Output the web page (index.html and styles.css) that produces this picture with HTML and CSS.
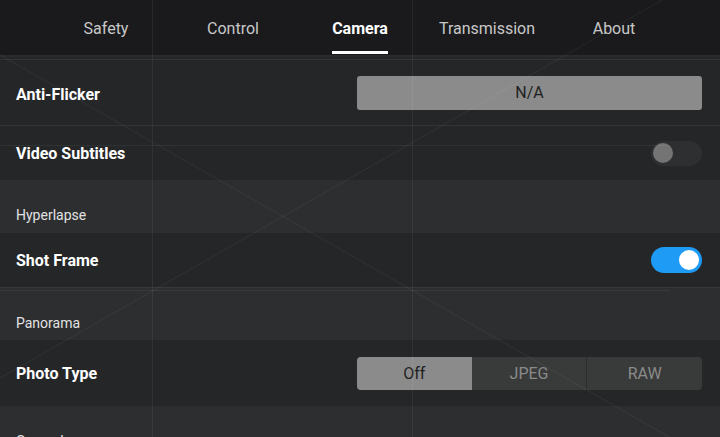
FILE: index.html
```html
<!DOCTYPE html>
<html>
<head>
<meta charset="utf-8">
<link rel="stylesheet" href="styles.css">
</head>
<body>
<div class="page">
  <nav class="tabs">
    <div class="tab"><span>Safety</span></div>
    <div class="tab"><span>Control</span></div>
    <div class="tab active"><span>Camera</span></div>
    <div class="tab"><span>Transmission</span></div>
    <div class="tab"><span>About</span></div>
  </nav>
  <div class="list">
    <div class="row tall first">
      <span class="label low">Anti-Flicker</span>
      <div class="button">N/A</div>
    </div>
    <div class="row">
      <span class="label">Video Subtitles</span>
      <div class="toggle"><div class="knob"></div></div>
    </div>
    <div class="section">Hyperlapse</div>
    <div class="row">
      <span class="label">Shot Frame</span>
      <div class="toggle on"><div class="knob"></div></div>
    </div>
    <div class="section sep">Panorama</div>
    <div class="row tall">
      <span class="label">Photo Type</span>
      <div class="segmented">
        <div class="seg selected">Off</div>
        <div class="seg">JPEG</div>
        <div class="seg divided">RAW</div>
      </div>
    </div>
    <div class="section">General</div>
  </div>
  <svg class="overlay" width="720" height="437" viewBox="0 0 720 437">
    <line x1="152.5" y1="0" x2="152.5" y2="437"/>
    <line x1="412.5" y1="0" x2="412.5" y2="437"/>
    <line x1="0" y1="55" x2="720" y2="466"/>
    <line x1="0" y1="378" x2="720" y2="-33"/>
    <line x1="0" y1="145.5" x2="670" y2="145.5"/>
    <line x1="0" y1="290.5" x2="670" y2="290.5"/>
  </svg>
</div>
</body>
</html>
```

FILE: styles.css
```css
* { box-sizing: border-box; }
html, body { margin: 0; padding: 0; }
body {
  background: #252627;
  font-family: Roboto, "Noto Sans", sans-serif;
  color: #fff;
}
.page {
  position: relative;
  width: 720px;
  height: 437px;
  overflow: hidden;
  background: #252627;
}
.tabs {
  background: #1a1a1c;
  display: flex;
  justify-content: center;
  border-bottom: 2px solid #2a2b2b;
  height: 57px;
}
.tab {
  width: 127px;
  display: flex;
  justify-content: center;
  color: #c8c8c8;
  font-size: 16px;
}
.tab span {
  display: block;
  padding-top: 19px;
  line-height: 20px;
  height: 55px;
}
.tab.active { color: #fff; font-weight: 700; }
.tab.active span {
  height: 54px;
  border-bottom: 3px solid #fff;
}
.list {
  padding-top: 2px;
}
.row {
  height: 54px;
  display: flex;
  align-items: center;
  justify-content: space-between;
  padding: 0 18px 0 16px;
  background: #252627;
}
.row.tall { height: 66px; }
.row.first {
  border-top: 1px solid #333435;
  border-bottom: 1px solid #333435;
  height: 67px;
}
.label {
  font-size: 16px;
  font-weight: 700;
  color: #fff;
}
.label.low { padding-top: 3px; }
.section {
  height: 53px;
  background: #2d2e30;
  padding: 27px 16px 0;
  font-size: 14px;
  color: #e2e2e2;
  line-height: 16px;
}
.section.sep { border-top: 1px solid #38393b; }
.button {
  width: 345px;
  height: 34px;
  border-radius: 3px;
  background: #8b8b8b;
  color: #1f1f1f;
  font-size: 16px;
  display: flex;
  align-items: center;
  justify-content: center;
}
.toggle {
  width: 51px;
  height: 25px;
  border-radius: 13px;
  background: #2e2f30;
  display: flex;
  align-items: center;
  padding: 0 2px;
}
.knob {
  width: 20px;
  height: 20px;
  border-radius: 50%;
  background: #747474;
}
.toggle.on {
  background: #1e9bf5;
  height: 26px;
  justify-content: flex-end;
  padding: 0 3px;
}
.toggle.on .knob { background: #fff; }
.segmented {
  width: 345px;
  height: 33px;
  border-radius: 4px;
  overflow: hidden;
  display: flex;
  background: #393a3a;
}
.seg {
  flex: 1;
  display: flex;
  align-items: center;
  justify-content: center;
  font-size: 16px;
  color: #8a8a8a;
}
.seg.selected { background: #8b8b8b; color: #1f1f1f; }
.seg.divided { border-left: 1px solid #2c2d2d; }
.overlay {
  position: absolute;
  left: 0;
  top: 0;
  pointer-events: none;
}
.overlay line {
  stroke: rgba(255, 255, 255, 0.06);
  stroke-width: 1;
}
```
